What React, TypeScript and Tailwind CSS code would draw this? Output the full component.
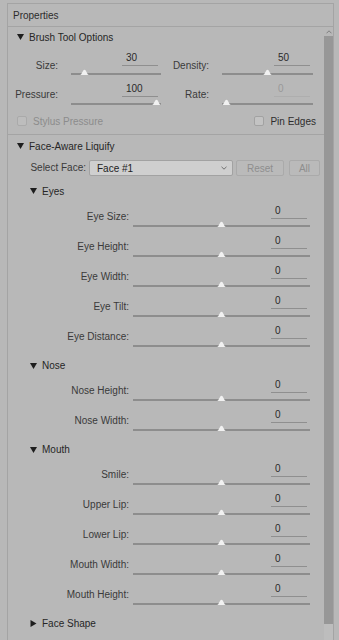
const eyes = ['Eye Size', 'Eye Height', 'Eye Width', 'Eye Tilt', 'Eye Distance']
const nose = ['Nose Height', 'Nose Width']
const mouth = ['Smile', 'Upper Lip', 'Lower Lip', 'Mouth Width', 'Mouth Height']

export default function App() {
  return (
    <div className="h-[640px] w-[339px] overflow-hidden bg-[#b8b8b8] pt-[3px] pl-[7px] font-['Liberation_Sans',Arial,sans-serif] text-[10px] text-[#2a2a2a]">
      <div className="flex h-[637px] w-[327px] flex-col border-x border-t border-[#a4a4a4]">
        <div className="flex h-[23px] shrink-0 items-center border-b border-[#a4a4a4] pl-[5px] text-[#2c2c2c]">
          Properties
        </div>
        <div className="flex min-h-0 flex-1">
          <div className="w-[316px] shrink-0">
            <Header title="Brush Tool Options" className="h-[20px] pl-[9px]" />

            <div className="flex h-[31px]">
              <BrushCell label="Size:" labelW="w-[50px]" ctrlW={90} value="30" pos={0.105} tall />
              <BrushCell label="Density:" labelW="w-[48px]" ctrlW={91} value="50" pos={0.5} tall />
            </div>
            <div className="flex h-[30px]">
              <BrushCell label="Pressure:" labelW="w-[50px]" ctrlW={90} value="100" pos={1} />
              <BrushCell label="Rate:" labelW="w-[48px]" ctrlW={91} value="0" pos={0} disabled />
            </div>

            <div className="flex h-[27px] items-center border-b border-[#a4a4a4] pl-[9px] pr-[8px]">
              <Checkbox disabled />
              <span className="ml-[6px] text-[#8c8c8c]">Stylus Pressure</span>
              <span className="ml-auto">
                <Checkbox />
              </span>
              <span className="ml-[6px] text-[#2e2e2e]">Pin Edges</span>
            </div>

            <Header title="Face-Aware Liquify" className="h-[22px] pl-[9px]" />

            <div className="flex h-[23px] items-start pt-[3px]">
              <span className="w-[78px] text-right leading-[16px] text-[#3a3a3a]">Select Face:</span>
              <div className="ml-[3px] flex h-[16px] w-[144px] items-center justify-between rounded-[2px] border border-[#a2a2a2] bg-[#cfcfcf] pl-[7px] pr-[5px] text-[#222]">
                <span>Face #1</span>
                <svg width="6" height="4" viewBox="0 0 6 4">
                  <path d="M0.5 0.8 L3 3.2 L5.5 0.8" fill="none" stroke="#6f6f6f" strokeWidth="1" />
                </svg>
              </div>
              <div className="ml-[3px] flex h-[16px] w-[48px] items-center justify-center rounded-[2px] border border-[#aaaaaa] bg-[#bababa] text-[#8e8e8e]">
                Reset
              </div>
              <div className="ml-[5px] flex h-[16px] w-[31px] items-center justify-center rounded-[2px] border border-[#aaaaaa] bg-[#bababa] text-[#8e8e8e]">
                All
              </div>
            </div>

            <Header title="Eyes" className="h-[22px] pl-[22px]" />
            {eyes.map((l) => (
              <FaceRow key={l} label={l} />
            ))}
            <Header title="Nose" className="h-[24px] pl-[22px] pt-[3px]" />
            {nose.map((l) => (
              <FaceRow key={l} label={l} />
            ))}
            <Header title="Mouth" className="h-[24px] pl-[22px] pt-[3px]" />
            {mouth.map((l) => (
              <FaceRow key={l} label={l} />
            ))}
            <Header title="Face Shape" className="h-[24px] pl-[22px] pt-[3px]" closed />
          </div>

          <div className="flex w-[9px] flex-col">
            <div className="flex h-[9px] shrink-0 items-center justify-center">
              <svg width="6" height="4" viewBox="0 0 6 4">
                <path d="M0.5 3.3 L3 0.8 L5.5 3.3" fill="none" stroke="#7e7e7e" strokeWidth="1" />
              </svg>
            </div>
            <div className="h-[588px] shrink-0 bg-[#979797]" />
            <div className="flex-1 bg-[#bdbdbd]" />
          </div>
        </div>
      </div>
    </div>
  )
}

function Header({ title, className, closed }: { title: string; className: string; closed?: boolean }) {
  return (
    <div className={`flex items-center text-[#262626] ${className}`}>
      <span className="flex w-[12px] shrink-0 items-center">
        {closed ? (
          <svg width="7" height="7" viewBox="0 0 7 7">
            <polygon points="0.5,0 6.5,3.5 0.5,7" fill="#1e1e1e" />
          </svg>
        ) : (
          <svg width="7" height="6" viewBox="0 0 7 6">
            <polygon points="0,0 7,0 3.5,6" fill="#1e1e1e" />
          </svg>
        )}
      </span>
      {title}
    </div>
  )
}

function Slider({ width, pos, trackTop, h }: { width: number; pos: number; trackTop: string; h: string }) {
  const left = Math.round((width - 9) * pos)
  return (
    <div className={`relative ${h}`} style={{ width }}>
      <div className={`absolute inset-x-0 h-[2px] bg-[#8d8d8d] ${trackTop}`} />
      <svg
        className={`absolute ${trackTop} -translate-y-[4px]`}
        style={{ left }}
        width="9"
        height="6"
        viewBox="0 0 9 6"
      >
        <path d="M0 6 C2 6 2.6 0.8 4.5 0.8 C6.4 0.8 7 6 9 6 Z" fill="#f1f1f1" />
      </svg>
    </div>
  )
}

function ValueBox({ value, disabled }: { value: string; disabled?: boolean }) {
  return (
    <div
      className={`mr-[3px] h-[16px] w-[36px] self-end border-b pl-[4px] leading-[15px] ${
        disabled ? 'border-[#aeaeae] text-[#999999]' : 'border-[#8f8f8f] text-[#2a2a2a]'
      }`}
    >
      {value}
    </div>
  )
}

function BrushCell({
  label,
  labelW,
  ctrlW,
  value,
  pos,
  tall,
  disabled,
}: {
  label: string
  labelW: string
  ctrlW: number
  value: string
  pos: number
  tall?: boolean
  disabled?: boolean
}) {
  return (
    <div className="flex">
      <div className={`${labelW} text-right leading-[14px] text-[#3a3a3a] ${tall ? 'pt-[12px]' : 'pt-[10px]'}`}>
        {label}
      </div>
      <div className="ml-[13px] flex flex-col pt-[3px]" style={{ width: ctrlW }}>
        <ValueBox value={value} disabled={disabled} />
        <Slider
          width={ctrlW}
          pos={pos}
          h={tall ? 'h-[12px]' : 'h-[11px]'}
          trackTop={tall ? 'top-[7px]' : 'top-[6px]'}
        />
      </div>
    </div>
  )
}

function FaceRow({ label }: { label: string }) {
  return (
    <div className="flex h-[30px]">
      <div className="w-[121px] pt-[8px] text-right leading-[14px] text-[#3a3a3a]">{label}:</div>
      <div className="ml-[4px] flex w-[177px] flex-col pt-[1px]">
        <ValueBox value="0" />
        <Slider width={177} pos={0.5} h="h-[13px]" trackTop="top-[6px]" />
      </div>
    </div>
  )
}

function Checkbox({ disabled }: { disabled?: boolean }) {
  return (
    <span
      className={`block h-[10px] w-[10px] rounded-[2px] border ${
        disabled ? 'border-[#aaaaaa] bg-[#bdbdbd]' : 'border-[#a2a2a2] bg-[#c3c3c3]'
      }`}
    />
  )
}
